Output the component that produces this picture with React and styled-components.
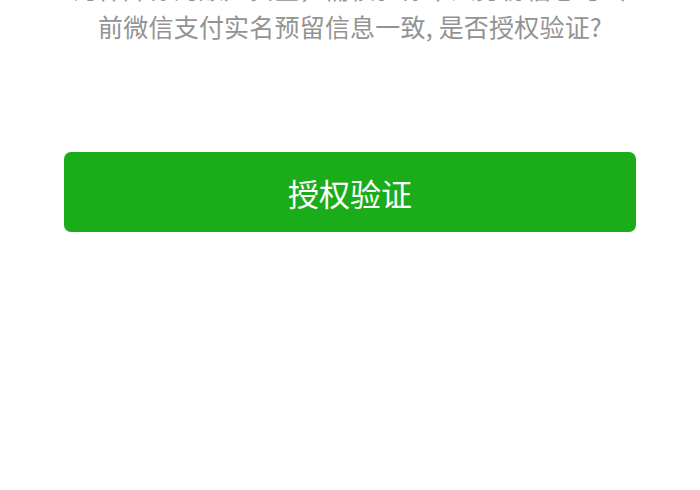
import React from 'react'
import styled, { createGlobalStyle } from 'styled-components'

const GlobalStyle = createGlobalStyle`
  html, body {
    margin: 0;
    padding: 0;
    background: #ffffff;
    overflow: hidden;
  }
  body {
    font-family: "Noto Sans CJK SC", "Noto Sans", sans-serif;
  }
`

const Page = styled.div`
  width: 700px;
  height: 490px;
  display: flex;
  flex-direction: column;
  align-items: center;
  background: #fff;
`

const Notice = styled.p`
  margin: -31px 0 0;
  width: 640px;
  text-align: center;
  font-size: 25px;
  line-height: 38px;
  letter-spacing: 0.2px;
  color: #939393;
`

const AuthButton = styled.button`
  margin-top: 107px;
  width: 572px;
  height: 80px;
  border: none;
  border-radius: 7px;
  background: #1aad19;
  color: #fff;
  font-family: "Noto Sans CJK SC", "Noto Sans", sans-serif;
  font-size: 31px;
  cursor: pointer;
`

export default function App() {
  return (
    <>
      <GlobalStyle />
      <Page>
        <Notice>
          为保障你的账户安全，需核验你本人身份信息与当
          <br />
          前微信支付实名预留信息一致, 是否授权验证?
        </Notice>
        <AuthButton>授权验证</AuthButton>
      </Page>
    </>
  )
}
